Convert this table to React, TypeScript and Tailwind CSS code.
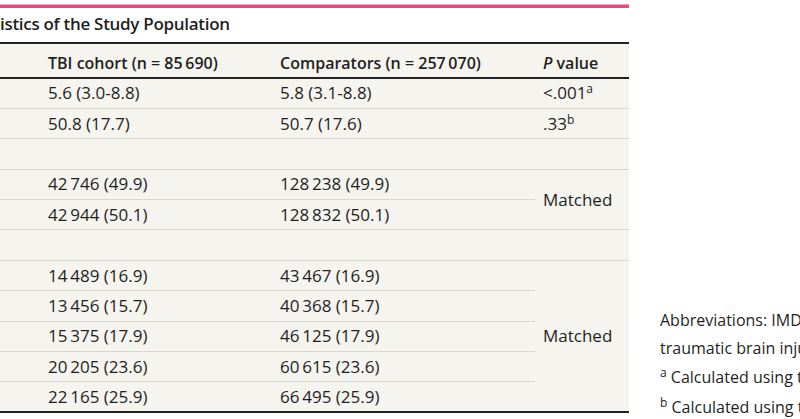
import React from 'react';

type Row = {
  tbi?: string;
  comp?: string;
  p?: React.ReactNode;
  pSpan?: number;
  noP?: boolean;
};

const rows: Row[] = [
  { tbi: '5.6 (3.0-8.8)', comp: '5.8 (3.1-8.8)', p: <>&lt;.001<sup className="text-[12px]">a</sup></> },
  { tbi: '50.8 (17.7)', comp: '50.7 (17.6)', p: <>.33<sup className="text-[12px]">b</sup></> },
  { p: '' },
  { tbi: '42\u2009746 (49.9)', comp: '128\u2009238 (49.9)', p: 'Matched', pSpan: 2 },
  { tbi: '42\u2009944 (50.1)', comp: '128\u2009832 (50.1)', noP: true },
  { p: '' },
  { tbi: '14\u2009489 (16.9)', comp: '43\u2009467 (16.9)', p: 'Matched', pSpan: 5 },
  { tbi: '13\u2009456 (15.7)', comp: '40\u2009368 (15.7)', noP: true },
  { tbi: '15\u2009375 (17.9)', comp: '46\u2009125 (17.9)', noP: true },
  { tbi: '20\u2009205 (23.6)', comp: '60\u2009615 (23.6)', noP: true },
  { tbi: '22\u2009165 (25.9)', comp: '66\u2009495 (25.9)', noP: true },
];

const cell = 'border-b border-[#dad8ce] pl-2 align-middle leading-[22px]';

export default function App() {
  return (
    <div
      className="flex h-[419px] w-[800px] overflow-hidden bg-white text-[#1f1f1f]"
      style={{ fontFamily: '"Open Sans", Lato, sans-serif' }}
    >
      <div className="flex w-[629px] shrink-0 flex-col">
        <div className="mt-[4px] h-[4px] bg-[#e9497a] border-t border-[#f4a9c0]" />
        <h2 className="h-[34px] pt-[4px] text-[17px] font-semibold leading-[24px] whitespace-nowrap tracking-[-0.3px]">
          istics of the Study Population
        </h2>
        <table className="w-full table-fixed border-collapse bg-[#f5f4ee] text-[17px]">
          <colgroup>
            <col className="w-[40px]" />
            <col className="w-[232px]" />
            <col className="w-[263px]" />
            <col className="w-[94px]" />
          </colgroup>
          <thead>
            <tr className="h-[35px] border-y-2 border-[#222] text-[16px]">
              <th />
              <th className="pl-2 pt-[5px] text-left font-semibold">TBI cohort (n = 85{'\u2009'}690)</th>
              <th className="pl-2 pt-[5px] text-left font-semibold">Comparators (n = 257{'\u2009'}070)</th>
              <th className="pl-2 pt-[5px] text-left font-semibold">
                <i>P</i> value
              </th>
            </tr>
          </thead>
          <tbody>
            {rows.map((r, i) => (
              <tr key={i} className={`h-[30.4px] ${i === rows.length - 1 ? 'border-b-2 border-[#222]' : ''}`}>
                <td className={cell} />
                <td className={cell}>{r.tbi}</td>
                <td className={cell}>{r.comp}</td>
                {!r.noP && (
                  <td rowSpan={r.pSpan ?? 1} className={cell}>
                    {r.p}
                  </td>
                )}
              </tr>
            ))}
          </tbody>
        </table>
      </div>
      <div className="ml-[31px] mt-[306px] shrink-0 whitespace-nowrap text-[16px] leading-[28px]">
        <p>
          Abbreviations: IMD, Index of Multiple Deprivation; TBI,
          <br />
          traumatic brain injury.
        </p>
        <p className="mt-[1px]">
          <sup className="text-[12px]">a</sup> Calculated using the Mann-Whitney <i>U</i> test.
        </p>
        <p className="mt-[2px]">
          <sup className="text-[12px]">b</sup> Calculated using the <i>t</i> test.
        </p>
      </div>
    </div>
  );
}
